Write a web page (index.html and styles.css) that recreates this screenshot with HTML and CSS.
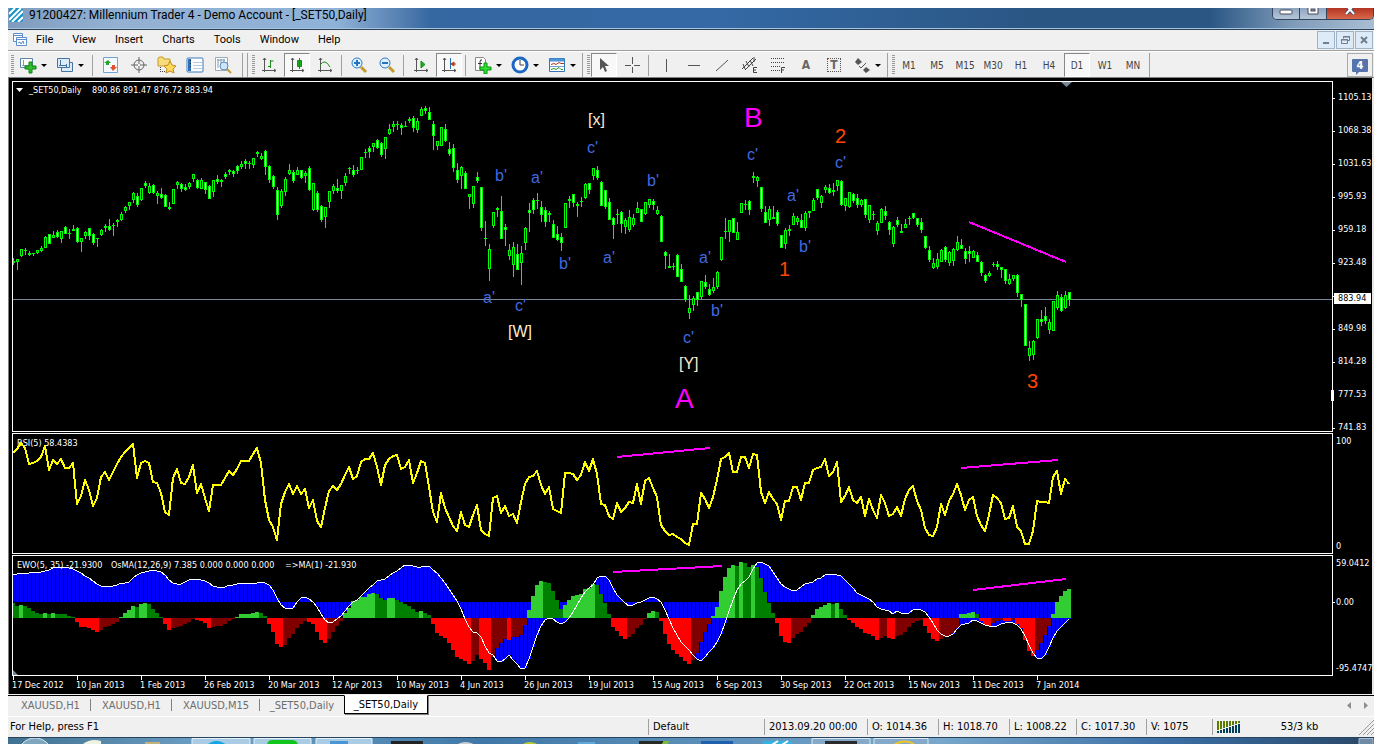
FILE: index.html
```html
<!DOCTYPE html>
<html lang="en">
<head>
    <meta charset="UTF-8">
    <title>91200427: Millennium Trader 4 - Demo Account - [_SET50,Daily]</title>
    <link rel="stylesheet" href="styles.css">
</head>
<body>
<div class="window">

    <header class="titlebar">
        <svg class="logo" width="14" height="14" viewBox="0 0 14 14"><rect width="14" height="14" rx="2" fill="#1a94c4"/><path d="M0 6L6 0M0 12L12 0M3 14L14 3M9 14L14 9" stroke="#fff" stroke-width="2"/></svg>
        <h1>91200427: Millennium Trader 4 - Demo Account - [_SET50,Daily]</h1>
        <div class="caption">
            <button class="cap" aria-label="Minimize"><svg width="14" height="9"><rect x="1" y="2" width="12" height="4" rx="1" fill="#fff" stroke="#444b5c"/></svg></button>
            <button class="cap" aria-label="Maximize"><svg width="14" height="9"><path d="M2 -1H12V6H2z" fill="#fff" stroke="#444b5c"/><rect x="5" y="1" width="4" height="2" fill="#8a99ad" stroke="#444b5c"/></svg></button>
            <button class="cap close" aria-label="Close"><svg width="14" height="9"><path d="M3 -3L11 6M11 -3L3 6" stroke="#444b5c" stroke-width="4"/><path d="M3 -3L11 6M11 -3L3 6" stroke="#fff" stroke-width="2"/></svg></button>
        </div>
    </header>

    <nav class="menubar">
        <svg class="doc" width="16" height="16" viewBox="0 0 16 16" fill="#fff" stroke="#5b8fd0"><path d="M1.500 1.500h9v8h-9zM1.500 3.500h9"/><path d="M4.500 5.500h10v8h-10zM4.500 7.500h10"/><path d="M6 11l2-1 1 2 2-3 1 3" fill="none"/></svg>
        <a href="#">File</a>
        <a href="#">View</a>
        <a href="#">Insert</a>
        <a href="#">Charts</a>
        <a href="#">Tools</a>
        <a href="#">Window</a>
        <a href="#">Help</a>
        <div class="mdi">
            <button aria-label="Minimize chart"><svg width="10" height="10"><path d="M2 8h6" stroke="#6d7f90" stroke-width="2"/></svg></button>
            <button aria-label="Restore chart"><svg width="10" height="10" fill="none" stroke="#6d7f90"><path d="M3.500 3.500v-2h6v4h-2M3 2h7"/><path d="M1.500 4.500h6v4h-6zM1 5h7"/></svg></button>
            <button aria-label="Close chart"><svg width="10" height="10"><path d="M2 2l6 6M8 2l-6 6" stroke="#6d7f90" stroke-width="2"/></svg></button>
        </div>
    </nav>

    <div class="toolbar">
        <i class="grip"></i>
        <button class="drop" aria-label="New chart"><svg width="18" height="18"><path d="M1.500 2.500h12v9h-12z" fill="#fff" stroke="#5a86ad"/><path d="M4.500 4v6M3 9.500h8" stroke="#7d99b5"/><path d="M10 6h3v4h4v3h-4v4h-3v-4h-4v-3h4z" fill="#30c030" stroke="#0a800a"/></svg></button>
        <button class="drop" aria-label="Profiles"><svg width="18" height="18" fill="#dcebfa" stroke="#44739f"><path d="M5.500 6.500h11v9h-11z"/><path d="M1.500 2.500h12v9h-12z"/><path d="M4.500 4v6M3 9.500h8M10.500 8v3" fill="none"/></svg></button>
        <i class="sep wide"></i>
        <button aria-label="Market watch"><svg width="18" height="18"><path d="M1.500 1.500h14v15h-14z" fill="#f4f9ff" stroke="#6fa3d8"/><path d="M6 4l3 3h-2v2h-3v-2h-2z" fill="#2ba32b"/><path d="M11 15l-3-4h2v-2h3v2h2z" fill="#e2512a"/></svg></button>
        <button aria-label="Data window"><svg width="18" height="18" fill="none" stroke="#666"><circle cx="9" cy="9" r="5"/><path d="M9 1v7M9 10v7M1 9h7M10 9h7"/></svg></button>
        <button aria-label="Navigator"><svg width="20" height="18"><path d="M1 3q0-2 2-2h3l1 2h6v7h-12z" fill="#f7dc7c" stroke="#c79b2b"/><path d="M3.500 11v5M5 15.500h4" stroke="#444" stroke-dasharray="1 1"/><path d="M13 5l2 4 4 1-3 3 1 4-4-2-4 2 1-4-3-3 4-1z" fill="#ffd95a" stroke="#c08a1c"/></svg></button>
        <button aria-label="Terminal"><svg width="18" height="18"><rect x="1" y="2" width="16" height="14" rx="1" fill="#fff" stroke="#3b7bbf"/><path d="M2 3h3v12h-3z" fill="#2f6fb6"/><path d="M7 6.500h9M7 9.500h9M7 12.500h9" stroke="#b9cbdc"/><path d="M4.500 4v9" stroke="#222" stroke-dasharray="1 2"/></svg></button>
        <button aria-label="Strategy tester"><svg width="18" height="18"><path d="M1.500 1.500h12v13h-12z" fill="#fff" stroke="#9aaabb"/><path d="M3 4h8M4 3v9M7 3v4M10 3v4" stroke="#7d99b5"/><circle cx="10" cy="10" r="4" fill="#cfe6fa" stroke="#5a8ab8"/><path d="M13 13l4 4" stroke="#c79b2b" stroke-width="2"/></svg></button>
        <i class="groupend double"></i><i class="grip"></i>
        <button aria-label="Bar chart"><svg width="16" height="16" fill="none" stroke="#555"><path d="M3.500 1v14M1 13.500h14M2 3l1.500-2L5 3M13 12l2 1.500-2 1.500"/><path d="M9.500 10V4h3M7 9.500h3M9.500 3v8" stroke="#178a17"/></svg></button>
        <button class="pressed" aria-label="Candlesticks"><svg width="16" height="16" fill="none" stroke="#555"><path d="M3.500 1v14M1 13.500h14M2 3l1.500-2L5 3M13 12l2 1.500-2 1.500"/><path d="M10.500 1v11M8.500 3.500h4v6h-4z" fill="#1fae1f" stroke="#178a17"/></svg></button>
        <button aria-label="Line chart"><svg width="16" height="16" fill="none" stroke="#555"><path d="M3.500 1v14M1 13.500h14M2 3l1.500-2L5 3M13 12l2 1.500-2 1.500"/><path d="M3 8q5-7 10 2" stroke="#178a17"/></svg></button>
        <i class="sep"></i>
        <button aria-label="Zoom in"><svg width="18" height="18"><path d="M11 11l5 5" stroke="#c79b2b" stroke-width="3"/><circle cx="7" cy="7" r="5" fill="#dff0ff" stroke="#2f7cc4" stroke-width="1"/><path d="M4 7h6M7 4v6" stroke="#2374c0" stroke-width="2"/></svg></button>
        <button aria-label="Zoom out"><svg width="18" height="18"><path d="M11 11l5 5" stroke="#c79b2b" stroke-width="3"/><circle cx="7" cy="7" r="5" fill="#dff0ff" stroke="#2f7cc4" stroke-width="1"/><path d="M4 7h6" stroke="#2374c0" stroke-width="2"/></svg></button>
        <i class="sep"></i>
        <button aria-label="Auto scroll"><svg width="16" height="16" fill="none" stroke="#555"><path d="M3.500 1v14M1 13.500h14M2 3l1.500-2L5 3M13 12l2 1.500-2 1.500"/><path d="M8 4v7l4-3.500z" fill="#1fae1f" stroke="#178a17"/></svg></button>
        <button class="pressed" aria-label="Chart shift"><svg width="16" height="16" fill="none" stroke="#555"><path d="M3.500 1v14M1 13.500h14M2 3l1.500-2L5 3M13 12l2 1.500-2 1.500"/><path d="M9.500 1v11" stroke="#1f6fb2"/><path d="M10 7l3-2v4zM12 7h3" fill="#c23a0c" stroke="#c23a0c"/></svg></button>
        <i class="sep"></i>
        <button class="drop" aria-label="Indicators"><svg width="18" height="18"><path d="M1.500 1.500h8l2 2v11h-10z" fill="#fff" stroke="#888"/><path d="M8 4q-2-1-2 2v7M4 7.500h4" fill="none" stroke="#333"/><path d="M10 7h3v4h4v3h-4v4h-3v-4h-4v-3h4z" fill="#30e030" stroke="#0a900a"/></svg></button>
        <button class="drop" aria-label="Periods"><svg width="18" height="18"><circle cx="9" cy="9" r="7" fill="#fff" stroke="#1c66c4" stroke-width="3"/><path d="M9 4v5h4" fill="none" stroke="#444"/></svg></button>
        <button class="drop" aria-label="Templates"><svg width="18" height="18"><path d="M1.500 2.500h15v13h-15z" fill="#fff" stroke="#3576b5"/><path d="M2 4h14" stroke="#4b92d6" stroke-width="3"/><path d="M3 8.500l3-1 2 1 3-2 2 1h3" fill="none" stroke="#b2371e"/><path d="M2 10.500h14" stroke="#6fa3d8"/><path d="M3 13.500l3-1 2 1 3-2 2 2h2" fill="none" stroke="#2c962c"/></svg></button>
        <i class="groupend"></i><i class="grip"></i>
        <button class="pressed" aria-label="Cursor"><svg width="16" height="16"><path d="M4 1v12l3-3 2 5 2-1-2-5h4z" fill="#555"/></svg></button>
        <button aria-label="Crosshair"><svg width="16" height="16"><path d="M8.500 0v7M8.500 10v6M1 8.500h6M10 8.500h6" stroke="#555"/></svg></button>
        <i class="sep"></i>
        <button aria-label="Vertical line"><svg width="16" height="16"><path d="M8.500 2v13" stroke="#555"/></svg></button>
        <button aria-label="Horizontal line"><svg width="16" height="16"><path d="M2 8.500h12" stroke="#555"/></svg></button>
        <button aria-label="Trendline"><svg width="16" height="16"><path d="M2 14L14 3" stroke="#555"/></svg></button>
        <button aria-label="Equidistant channel"><svg width="18" height="18" fill="none" stroke="#444"><path d="M1 13L12 2M4 14L15 3M2 8l2 5M5 5l3 6M9 4l3 6M13 1v5"/><path d="M16 11.500h-3.500v5H16M12.500 14H15"/></svg></button>
        <button aria-label="Fibonacci"><svg width="18" height="18" fill="none" stroke="#444"><path d="M2 2.500h14M2 6.500h14M2 10.500h9M2 14.500h9" stroke-dasharray="1 1"/><path d="M16 11.500h-3.500V17M12.500 14H15"/></svg></button>
        <button class="letter">A</button>
        <button class="letter boxed"><b>T</b></button>
        <button class="drop" aria-label="Arrows"><svg width="18" height="18"><path d="M2 6l3-4 4 4-4 3zM10 14l3-3 4 3-4 3z" fill="#555"/><path d="M6 10l2 2 5-5" fill="none" stroke="#555"/></svg></button>
        <i class="groupend"></i><i class="grip"></i>
        <button>M1</button>
        <button>M5</button>
        <button>M15</button>
        <button>M30</button>
        <button>H1</button>
        <button>H4</button>
        <button class="pressed">D1</button>
        <button>W1</button>
        <button>MN</button>
        <i class="groupend"></i>
        <button class="news" aria-label="Messages"><span>4</span></button>
    </div>

    <main class="charts">
        <section class="panel">
            <svg class="plot price" id="price">
                <path d="M16 88h7l-3.500 4z" fill="#fff" transform="translate(-13 -82)"/>
                <text x="16" y="11">_SET50,Daily</text>
                <text x="79" y="11">890.86 891.47 876.72 883.94</text>
                <path d="M1048 0h11l-5.500 5z" fill="#778899"/>
                <g transform="translate(-13 -82)">
                    <g id="candles" shape-rendering="crispEdges"></g>
                    <path class="trend" d="M969 222L1066 262"/>
                    <g class="wave">
                        <text x="495" y="181">b'</text>
                        <text x="531" y="183">a'</text>
                        <text x="587" y="153">c'</text>
                        <text x="647" y="186">b'</text>
                        <text x="603" y="263">a'</text>
                        <text x="559" y="269">b'</text>
                        <text x="483" y="303">a'</text>
                        <text x="515" y="311">c'</text>
                        <text x="699" y="263">a'</text>
                        <text x="711" y="316">b'</text>
                        <text x="683" y="343">c'</text>
                        <text x="747" y="160">c'</text>
                        <text x="787" y="201">a'</text>
                        <text x="799" y="252">b'</text>
                        <text x="835" y="168">c'</text>
                    </g>
                    <g class="wave cycle">
                        <text x="588" y="125">[x]</text>
                        <text x="508" y="337">[W]</text>
                        <text x="679" y="369">[Y]</text>
                    </g>
                    <g class="wave count">
                        <text x="779" y="276">1</text>
                        <text x="835" y="143">2</text>
                        <text x="1027" y="388">3</text>
                    </g>
                    <g class="wave major">
                        <text x="675" y="408">A</text>
                        <text x="744" y="127">B</text>
                    </g>
                </g>
            </svg>
            <ol class="scale ticks">
                <li>1105.13</li>
                <li>1068.38</li>
                <li>1031.63</li>
                <li>995.93</li>
                <li>959.18</li>
                <li>923.48</li>
                <li class="current"><span>883.94</span></li>
                <li>849.98</li>
                <li>814.28</li>
                <li class="handle">777.53</li>
                <li>741.83</li>
            </ol>
        </section>

        <section class="panel">
            <svg class="plot" id="rsi">
                <text x="4" y="12">RSI(5) 58.4383</text>
                <polyline id="rsiLine" class="rsi"/>
                <path class="trend" d="M604 23L697 14M948 34L1045 26"/>
            </svg>
            <ol class="scale spread">
                <li>100</li>
                <li>0</li>
            </ol>
        </section>

        <section class="panel">
            <svg class="plot" id="ewo">
                <g shape-rendering="crispEdges" id="ewoBars"></g>
                <polyline id="ewoLine" class="ma"/>
                <text x="4" y="12">EWO(5, 35) -21.9300</text>
                <text x="98" y="12">OsMA(12,26,9) 7.385 0.000 0.000 0.000</text>
                <text x="272" y="12">=&gt;MA(1) -21.930</text>
                <path class="trend" d="M600 16L709 10M960 34L1053 23"/>
                <path d="M0 114l5 5h-5z" fill="#778899"/>
            </svg>
            <ol class="scale spread three">
                <li>59.0412</li>
                <li class="zero">0.00</li>
                <li>-95.4747</li>
            </ol>
        </section>

        <ol class="dates">
            <li>17 Dec 2012</li>
            <li>10 Jan 2013</li>
            <li>1 Feb 2013</li>
            <li>26 Feb 2013</li>
            <li>20 Mar 2013</li>
            <li>12 Apr 2013</li>
            <li>10 May 2013</li>
            <li>4 Jun 2013</li>
            <li>26 Jun 2013</li>
            <li>19 Jul 2013</li>
            <li>15 Aug 2013</li>
            <li>6 Sep 2013</li>
            <li>30 Sep 2013</li>
            <li>22 Oct 2013</li>
            <li>15 Nov 2013</li>
            <li>11 Dec 2013</li>
            <li>7 Jan 2014</li>
        </ol>
    </main>

    <div class="tabs">
        <button>XAUUSD,H1</button>
        <button>XAUUSD,H1</button>
        <button class="longer">XAUUSD,M15</button>
        <button class="last">_SET50,Daily</button>
        <button class="active">_SET50,Daily</button>
        <div class="scroller">
            <svg width="24" height="9" fill="#8c8c8c"><path d="M5 1v7L1 4.500zM18 1v7l4-3.500z"/></svg>
        </div>
    </div>

    <footer class="status">
        <span>For Help, press F1</span>
        <span>Default</span>
        <span>2013.09.20 00:00</span>
        <span>O: 1014.36</span>
        <span>H: 1018.70</span>
        <span>L: 1008.22</span>
        <span>C: 1017.30</span>
        <span>V: 1075</span>
        <span class="traffic">
            <svg width="24" height="13" id="signal" shape-rendering="crispEdges"></svg>
            <em>53/3 kb</em>
            <svg width="16" height="16" stroke="#999" stroke-width="1"><path d="M1 16L16 1M5 16L16 5M9 16L16 9M13 16L16 13"/></svg>
        </span>
    </footer>

    <div class="taskbar">
        <svg width="1366" height="8">
            <circle cx="27" cy="17" r="17" fill="#7fa6bf" stroke="#dfeaf2"/>
            <path d="M75 6q8-6 18-3v6h-18z" fill="#eef3e4"/><path d="M137 4h15v4h-15z" fill="#c3b27c"/>
            <path d="M184 .5h58v9h-58zM246 .5h57v9h-57zM308 .5h56v9h-56z" fill="#a9cbe3" stroke="#e4f1fa"/>
            <path d="M198 8q10-10 22 0z" fill="#12a5e8"/><path d="M259 8q0-6 5-6h20q6 0 6 6z" fill="#10c51c"/><path d="M322 3h18v5h-18z" fill="#4a95d8"/>
            <path d="M383 3h32v5h-32z" fill="#222"/><path d="M447 8q10-8 22 0z" fill="#c9cdd0"/><path d="M512 8q10-8 20 0z" fill="#b9c92e"/>
            <path d="M570 4h17v4h-17z" fill="#5fa8dc"/><path d="M631 3h24v5h-24z" fill="#262b26"/><path d="M656 3h6l-4 5h-6z" fill="#7bb83c"/>
            <path d="M693 3h32v5h-32z" fill="#1f5fae"/><path d="M755 3h29v5h-29z" fill="#35b3e4"/><path d="M762 8l8-5M772 8l8-5" stroke="#fff" stroke-width="2"/>
            <path d="M804 .5h58v9h-58zM866 .5h54v9h-54z" fill="#85a9c9" stroke="#dce9f4"/>
            <path d="M817 3h32v5h-32z" fill="#2b2b2b"/><path d="M884 8q12-8 22-2" fill="none" stroke="#f2c81e" stroke-width="2"/>
            <path d="M1351 .5h14v9h-14z" fill="#6f8aa5" stroke="#a9bccf"/>
        </svg>
    </div>
</div>
<script src="script.js"></script>
</body>
</html>
```
FILE: styles.css
```css
* {box-sizing: border-box;}
body {margin: 0;background: #fff;overflow-x: hidden;font-family: "DejaVu Sans Condensed", "Noto Sans", sans-serif;font-size: 10px;color: #000;}
.window {margin: 8px 8px 0 8px;background: #f0f0f0;}
button {font: inherit;color: inherit;padding: 0;border: 0;background: none;}
ol {list-style: none;margin: 0;padding: 0;}
svg {display: block;flex: none;}

/* title bar */
.titlebar {display: flex;align-items: flex-start;height: 22px;padding-left: 1px;border-bottom: 1px solid #2b3f55;box-shadow: inset 0 -1px #a7c4e0;
    background: linear-gradient(90deg, #7f9cbe 0, #93b1d2 8%, #8fb2d8 24%, #5f88b8 28%, #3567a1 31%, #3469a5 52%, #2a5684 75%, #2a5684 88%, #7f9bb9 94%, #a9bed4 100%);}
.logo {margin-right: 6px;}
h1 {flex: 1;margin: 0;font: 12px/15px Roboto, sans-serif;}
.caption {display: flex;height: 12px;border: 1px solid #35445a;border-top: 0;border-radius: 0 0 5px 5px;overflow: hidden;}
.cap {width: 27px;display: flex;justify-content: center;background: linear-gradient(#8fa5bf, #b5c6d8);border-right: 1px solid #35445a;}
.close {width: 46px;border-right: 0;background: linear-gradient(#b53423, #d9694a);}

/* menu */
.menubar {display: flex;align-items: center;height: 21px;padding: 0 1px 0 4px;border-bottom: 1px solid #a0a0a0;font: 11px/20px Roboto, sans-serif;}
.menubar a {color: #000;text-decoration: none;margin-right: 19px;}
.doc {margin-right: 8px;}
.mdi {margin-left: auto;display: flex;gap: 1px;}
.mdi button {width: 18px;height: 18px;display: flex;align-items: center;justify-content: center;background: #dcebf7;border: 1px solid #9fb4c6;}

/* toolbar */
.toolbar {display: flex;align-items: center;height: 27px;padding: 2px 1px 0 3px;border-bottom: 1px solid #808080;box-shadow: inset 0 1px #fff;color: #444;}
.toolbar button {width: 28px;height: 24px;flex: none;display: flex;align-items: center;justify-content: center;}
.toolbar .drop {width: 37px;justify-content: flex-start;padding-left: 5px;}
.drop::after {content: "";margin-left: 4px;border: 3px solid transparent;border-top-color: #000;border-bottom: 0;}
.toolbar .pressed {width: 26px;margin: 0 1px;border: 1px solid #fff;border-top-color: #888;border-left-color: #888;background: #f8f8f8;}
.grip {width: 3px;height: 20px;flex: none;background: repeating-linear-gradient(#999 0 1px, #f0f0f0 1px 2px);}
.sep {width: 1px;height: 21px;margin: 0 3px 0 2px;flex: none;background: #a0a0a0;}
.wide {margin: 0 4px;}
.groupend {width: 1px;height: 24px;margin: 0 4px 0 2px;flex: none;background: #a0a0a0;}
.double {width: 6px;margin: 0 4px 0 5px;background: none;border: 1px solid #a0a0a0;border-top: 0;border-bottom: 0;}
.toolbar .letter {font-size: 12px;font-weight: bold;color: #666;}
.boxed b {border: 1px dotted #555;line-height: 12px;padding: 0 2px;}
.toolbar .news {width: 26px;margin-left: auto;border: 1px solid #aaa;}
.news span {width: 16px;height: 13px;position: relative;background: #5673ab;color: #fff;line-height: 13px;font-size: 11px;font-weight: bold;border-radius: 1px;}
.news span::after {content: "";position: absolute;left: 4px;top: 13px;border: 3px solid transparent;border-top-color: #5673ab;border-bottom: 0;border-left: 0;}

/* charts */
.charts {background: #000;color: #fff;font-size: 9px;padding: 3px 0 0 3px;border-left: 1px solid #808080;border-right: 2px solid #e8e8e8;overflow: hidden;}
.panel {display: grid;grid-template-columns: 1fr 39px;margin-bottom: 1px;}
.plot {width: 100%;height: 121px;border: 1px solid #fff;overflow: hidden;}
.price {height: 351px;}
.plot text {fill: #fff;white-space: pre;}
.plot .trend {stroke: #f0f;stroke-width: 2;fill: none;shape-rendering: crispEdges;}
.rsi {fill: none;stroke: #ff0;stroke-width: 2;stroke-linejoin: round;shape-rendering: crispEdges;}
.ma {fill: none;stroke: #fff;stroke-width: 1;shape-rendering: crispEdges;}
.plot .wave text {font: 16px "Liberation Sans", sans-serif;fill: #4169e1;}
.plot .cycle text {fill: #ffebcd;}
.plot .count text {font-size: 20px;fill: #ff4500;}
.plot .major text {font-size: 28px;fill: #f0f;}

.ticks li {height: 33px;line-height: 33px;padding-left: 5px;position: relative;}
.ticks li:last-child {height: 20px;}
.ticks li::before, .zero::before {content: "";position: absolute;left: 0;top: 17px;width: 2px;height: 1px;background: #fff;}
.current span {position: absolute;left: 1px;top: 14px;width: 37px;height: 11px;padding-left: 4px;line-height: 11px;background: #fff;color: #000;}
.ticks .handle::before {left: -2px;top: 12px;width: 3px;height: 11px;}
.spread {display: flex;flex-direction: column;justify-content: space-between;padding: 3px 0 2px 3px;line-height: 11px;}
.three {display: grid;grid-template-rows: 39px 1fr auto;}
.zero {position: relative;}
.zero::before {left: -3px;top: 5px;}
.dates {display: flex;height: 18px;margin-top: -1px;}
.dates li {width: 64px;flex: none;line-height: 19px;position: relative;white-space: nowrap;}
.dates li::before {content: "";position: absolute;left: 1px;top: 0;width: 1px;height: 4px;background: #fff;}

/* chart tabs */
.tabs {display: flex;align-items: flex-start;height: 22px;margin-top: 1px;border-top: 1px solid #000;border-bottom: 1px solid #fff;color: #6d6d6d;font-size: 11px;padding-left: 2px;}
.tabs button {width: 81px;height: 18px;position: relative;}
.tabs button::after {content: "";position: absolute;right: 0;top: 3px;height: 12px;border-right: 1px solid #808080;}
.tabs .longer {width: 88px;}
.tabs .last, .tabs .active {width: 84px;}
.tabs .last::after, .tabs .active::after {display: none;}
.tabs .active {height: 19px;margin-top: -1px;background: #fff;color: #000;border: 1px solid #000;border-top-color: #fff;box-shadow: 1px 1px #808080;}
.scroller {margin: 5px 4px 0 auto;}

/* status bar */
.status {display: grid;grid-template-columns: 1fr 116px 103px 71px 71px 67px 70px 66px 162px;align-items: center;height: 20px;font-size: 11px;}
.status > span {padding-left: 4px;line-height: 16px;border-left: 1px solid #a0a0a0;white-space: nowrap;}
.status > span:first-child {padding-left: 2px;border: 0;}
.status .traffic {display: flex;align-items: center;justify-content: space-between;}
.traffic em {font-style: normal;}

.taskbar {height: 9px;overflow: hidden;border-top: 1px solid #27445f;background: linear-gradient(90deg, #3f7290 0, #6ea1c6 15%, #3f78a8 35%, #79a8cc 68%, #3a6ea5 85%, #294766 100%);}
```
FILE: script.js
```javascript
// one bar every 4px; candle = high, body top, body bottom, low, "u" up / "d" down
var STEP = 4;
var candles = ("258 261 263 265 d,259 259 262 270 u,249 249 256 257 u,248 250 250 255 d,251 253 255 256 d,253 253 253 256 d,250 250 253 254 u,246 248 251 252 u,236 237 248 248 u,234 234 244 244 d," +
    "231 235 238 238 u,230 232 237 238 d,231 231 239 243 u,226 227 234 234 d,229 233 233 239 d,225 229 231 231 d,227 228 242 243 d,238 238 242 252 u,231 232 236 239 u,228 228 236 240 d," +
    "233 234 243 245 d,238 238 239 247 d,229 230 235 236 u,224 226 228 232 d,219 226 230 231 d,223 225 225 236 d,219 220 222 227 d,212 214 220 221 u,206 207 211 213 u,202 202 206 210 u," +
    "192 193 200 203 u,193 196 205 207 d,188 188 200 201 u,181 183 186 188 d,183 186 193 194 u,184 185 193 194 d,191 193 196 204 u,188 194 198 199 d,194 195 207 207 d,202 207 209 210 d," +
    "189 189 204 204 u,181 182 185 189 u,183 184 189 192 d,184 187 190 191 d,182 183 187 189 u,174 174 179 182 u,179 180 188 189 d,178 180 189 189 u,182 182 190 194 d,185 186 199 199 d," +
    "180 180 192 197 u,175 179 182 184 d,179 180 182 187 d,172 174 177 179 d,169 170 172 175 d,170 171 174 177 d,165 166 171 174 d,161 164 167 169 u,159 161 164 169 d,161 163 163 169 d," +
    "158 158 165 168 u,151 152 154 157 d,153 156 159 160 u,150 151 167 175 d,165 166 180 183 d,175 176 187 189 d,187 190 215 220 d,189 191 206 208 u,177 179 192 196 u,164 170 174 175 u," +
    "170 172 181 183 d,167 170 175 175 u,170 170 178 179 d,171 173 176 183 u,166 168 190 191 d,183 183 210 211 u,191 193 210 212 d,205 206 220 222 d,207 207 217 228 u,191 191 202 208 u," +
    "184 186 191 194 u,179 188 191 193 d,185 185 191 199 u,173 176 183 186 u,167 168 168 174 d,165 170 175 177 d,167 170 170 174 d,157 157 170 170 u,149 152 152 158 d,146 148 152 158 d," +
    "143 143 147 152 u,139 140 148 149 d,142 143 155 157 d,137 137 149 159 u,124 129 134 135 u,121 124 127 132 u,121 124 124 130 d,123 125 128 135 d,121 126 127 127 d,117 119 121 123 d," +
    "116 118 128 132 d,118 121 130 133 u,107 109 116 116 u,106 108 111 114 d,107 112 120 120 d,121 124 136 150 d,141 141 146 150 u,127 127 146 146 u,124 129 141 142 d,142 149 154 156 d," +
    "144 148 168 172 d,163 170 180 183 d,166 167 176 189 u,171 173 189 189 d,194 194 197 209 u,186 186 204 208 u,172 177 181 183 d,187 187 228 231 d,221 238 238 246 d,244 249 269 281 u," +
    "212 212 226 228 u,207 208 210 217 d,196 211 239 239 d,224 227 230 246 d,244 250 256 260 u,242 247 265 277 u,244 254 270 270 d,246 253 263 285 u,227 228 243 250 u,203 210 213 232 d," +
    "198 200 210 214 d,193 200 200 209 d,201 207 215 222 d,207 210 222 227 d,211 213 215 222 d,220 224 238 238 d,226 234 240 241 d,233 237 243 251 d,203 203 228 228 u,196 199 201 208 d," +
    "194 194 203 207 d,202 204 206 217 d,197 201 201 207 d,183 184 198 199 u,183 183 190 194 d,168 168 176 180 u,166 170 178 180 d,181 182 206 206 d,190 190 207 209 d,198 202 220 220 d," +
    "217 218 225 239 d,209 214 214 224 d,211 212 224 233 d,218 220 227 234 u,210 217 230 232 u,214 218 225 227 u,202 208 213 213 u,209 209 222 222 d,202 202 214 215 u,199 199 205 208 u," +
    "199 201 205 210 d,206 210 214 215 u,215 216 242 242 d,251 252 256 269 d,254 266 268 268 d,263 266 266 270 d,254 255 277 277 d,264 269 282 282 d,285 286 300 302 d,295 308 313 319 u," +
    "296 298 305 311 u,292 292 300 306 d,281 281 297 300 u,275 282 287 289 d,284 289 295 296 d,278 287 291 293 u,271 272 287 289 u,237 237 260 261 u,218 231 231 239 d,220 220 232 242 u," +
    "218 218 233 233 d,222 232 240 240 u,203 203 213 213 u,200 204 204 210 d,200 201 210 215 d,172 176 178 183 d,176 177 181 187 u,187 187 209 212 d,206 212 223 223 d,206 209 220 226 u," +
    "206 217 219 219 d,210 212 224 226 d,235 235 248 248 d,228 230 244 249 u,225 229 231 236 d,213 216 225 225 u,216 218 222 225 u,214 220 228 228 d,211 213 228 231 u,211 211 213 218 d," +
    "198 200 211 211 u,189 189 198 200 d,195 196 203 208 u,185 187 190 193 u,184 188 193 194 d,183 190 192 196 d,180 180 186 191 u,180 181 205 206 d,198 198 206 211 u,192 192 207 208 u," +
    "193 194 201 203 d,194 198 205 208 d,199 200 205 207 u,199 199 215 218 d,205 205 220 223 u,211 214 214 220 d,221 223 231 235 u,208 209 223 223 u,206 211 216 220 d,221 222 230 235 d," +
    "226 227 244 247 u,217 220 225 227 d,224 231 233 233 d,219 224 228 228 u,216 218 218 225 d,213 213 218 219 d,218 218 225 227 d,218 222 230 233 d,236 236 248 249 d,246 250 260 262 d," +
    "258 263 268 269 u,253 259 267 269 u,249 250 262 262 u,246 247 260 262 d,251 252 263 266 u,248 249 261 266 u,236 242 250 251 u,239 245 249 249 d,248 251 259 264 d,246 251 254 262 d," +
    "250 251 258 258 u,252 255 262 262 d,261 262 273 276 d,274 275 281 283 d,271 273 276 277 u,262 264 264 267 d,261 264 267 270 d,267 267 270 278 d,269 269 281 284 d,274 279 284 285 u," +
    "275 275 279 281 u,274 275 293 297 d,294 294 300 307 d,304 304 346 346 d,341 348 356 361 u,340 341 355 360 u,319 319 338 339 u,310 319 322 326 d,307 316 321 324 d,319 322 330 334 u," +
    "301 301 331 331 u,291 295 308 310 u,294 297 311 312 d,291 295 308 309 u,292 292 300 306 d").split(",");

var rsi = [19,15,9,14,30,29,27,23,12,36,26,30,25,34,34,29,70,62,46,56,72,64,43,38,46,38,30,23,18,14,10,44,29,27,29,48,49,59,78,81,44,35,49,50,43,31,59,50,64,77,
    51,51,51,44,37,41,35,27,27,27,20,14,29,66,86,93,106,70,58,50,60,52,60,55,74,66,87,93,74,57,52,56,50,41,33,45,42,28,25,25,19,33,51,31,25,22,21,35,33,26,
    49,39,27,29,53,78,88,59,74,83,92,97,78,91,93,81,71,96,100,102,64,62,79,72,82,80,89,68,50,43,42,37,51,60,53,75,77,79,39,39,40,46,41,28,37,25,40,70,71,82,
    85,69,78,74,68,69,50,70,47,44,54,63,91,97,101,100,103,105,109,111,90,90,59,65,74,63,46,25,23,19,38,38,23,23,34,20,21,58,69,58,65,70,86,67,67,53,53,66,49,49,
    36,34,33,25,42,38,28,68,62,53,66,69,63,82,65,76,84,61,69,82,80,73,82,65,56,52,67,76,94,101,102,93,70,81,67,60,50,61,76,66,63,82,91,97,81,61,64,69,85,84,
    72,93,97,110,110,97,67,68,68,69,43,37,60,45,50];

var ewo = [19,18,17,17,17,16,16,16,15,14,12,11,11,11,12,13,15,17,20,22,25,28,30,30,31,30,29,27,27,26,22,19,17,16,15,14,15,16,19,24,27,28,28,26,24,23,23,24,25,27,
    30,31,32,31,29,29,28,27,27,27,27,27,26,27,29,34,42,49,52,52,52,46,42,41,43,46,51,58,64,67,66,63,60,55,50,46,44,40,36,32,29,25,24,23,20,17,15,12,9,9,
    10,11,11,10,10,14,17,22,27,33,39,45,53,63,71,76,77,81,90,97,99,105,106,103,99,104,108,113,112,103,91,79,70,64,62,63,66,68,66,62,56,49,42,36,32,29,22,20,20,24,
    32,39,43,47,50,49,47,46,44,42,41,43,46,54,63,72,79,86,90,94,99,103,105,101,96,92,86,78,67,55,44,34,28,25,21,13,7,6,8,10,16,22,28,31,33,35,34,31,28,27,
    26,23,22,19,18,18,19,20,24,28,32,37,39,41,43,46,51,53,54,55,58,55,57,58,57,54,53,54,56,61,67,74,78,80,80,78,73,69,68,67,64,65,67,69,70,71,70,68,67,66,
    67,69,73,80,89,97,102,103,99,91,82,75,71,67,63];

var osma = [15,12,13,12,10,7,5,4,5,4,5,4,4,4,2,1,-4,-9,-9,-10,-12,-14,-12,-9,-8,-6,-4,1,5,8,12,11,14,15,14,9,5,1,-6,-12,-10,-9,-8,-6,-4,-1,-2,-3,-5,-10,
    -9,-8,-8,-6,-3,-1,1,4,4,4,5,6,5,2,-6,-14,-26,-29,-27,-20,-16,-10,-6,-3,-4,-6,-14,-22,-25,-21,-14,-8,-3,5,10,17,18,21,21,24,25,24,20,18,20,20,18,16,14,12,
    9,6,7,5,3,-6,-15,-18,-20,-25,-32,-39,-41,-43,-46,-43,-37,-41,-45,-52,-39,-30,-25,-21,-22,-19,-19,-17,-7,8,22,33,37,36,35,27,18,9,13,18,22,23,24,29,30,34,33,24,15,4,
    -9,-13,-18,-21,-19,-16,-10,-7,-1,5,7,6,-3,-16,-26,-32,-36,-39,-43,-46,-42,-35,-24,-14,-6,2,11,27,41,50,53,52,56,55,51,53,51,40,26,15,5,-5,-18,-24,-25,-20,-16,-14,-9,-5,
    3,9,11,13,15,14,15,9,3,-2,-5,-9,-11,-15,-16,-18,-22,-20,-18,-20,-21,-18,-17,-14,-9,-5,-3,-2,-8,-15,-21,-23,-21,-19,-18,-15,-10,4,4,5,6,4,-3,-7,-8,-5,-3,-2,-3,-3,
    -2,-6,-10,-22,-33,-38,-32,-25,-17,-8,4,16,22,27,29];

function box(x, y, w, h) {
    return "M" + x + " " + y + "h" + w + "v" + h + "h-" + w + "z";
}

function path(d, fill) {
    return '<path d="' + d + '" fill="' + fill + '"/>';
}

// price panel
var lime = "", hollow = "", solid = "";
candles.forEach(function (row, i) {
    var c = row.split(" ");
    var x = 13 + i * STEP;
    var high = +c[0], top = +c[1], bottom = Math.max(+c[2], top + 1), low = Math.max(+c[3], bottom);
    lime += box(x, high, 1, low - high) + box(x - 1, top, 3, bottom - top);
    if (bottom - top > 2) {
        var inner = box(x, top + 1, 1, bottom - top - 2);
        if (c[4] == "u") hollow += inner;
        else solid += inner;
    }
});
document.getElementById("candles").innerHTML =
    path(box(13, 299, 4000, 1), "#778899") + path(lime, "#0f0") + path(hollow, "#000") + path(solid, "#fff");

// rsi line
document.getElementById("rsiLine").setAttribute("points", rsi.map(function (y, i) {
    return i * STEP + "," + y;
}).join(" "));

// ewo: blue bars hang from the 0.00 level, OsMA bars from its own zero
var EWO_ZERO = 46, OSMA_ZERO = 62;
var blue = "", bars = "", colour = "#008000";
ewo.forEach(function (y, i) {
    blue += box(i * STEP - 1, Math.min(y, EWO_ZERO), 3, Math.abs(y - EWO_ZERO));
});
osma.forEach(function (v, i) {
    var prev = i ? osma[i - 1] : 16;
    if (v > 0 && v != prev) colour = v > prev ? "#32cd32" : "#008000";
    if (v < 0 && v != prev) colour = v < prev ? "#f00" : "#800000";
    bars += path(box(i * STEP - 2, v > 0 ? OSMA_ZERO - v : OSMA_ZERO, 4, Math.abs(v)), colour);
});
document.getElementById("ewoBars").innerHTML = path(blue, "#00f") + bars;
document.getElementById("ewoLine").setAttribute("points", ewo.map(function (y, i) {
    return i * STEP + "," + y;
}).join(" "));

// connection meter
var meter = "";
for (var i = 0; i < 8; i++) {
    meter += path(box(i * 3, 0, 2, 9 - i), "#5a7a00") + path(box(i * 3, 10 - i, 2, 2 + i), "#003f5c");
}
document.getElementById("signal").innerHTML = meter;
```
